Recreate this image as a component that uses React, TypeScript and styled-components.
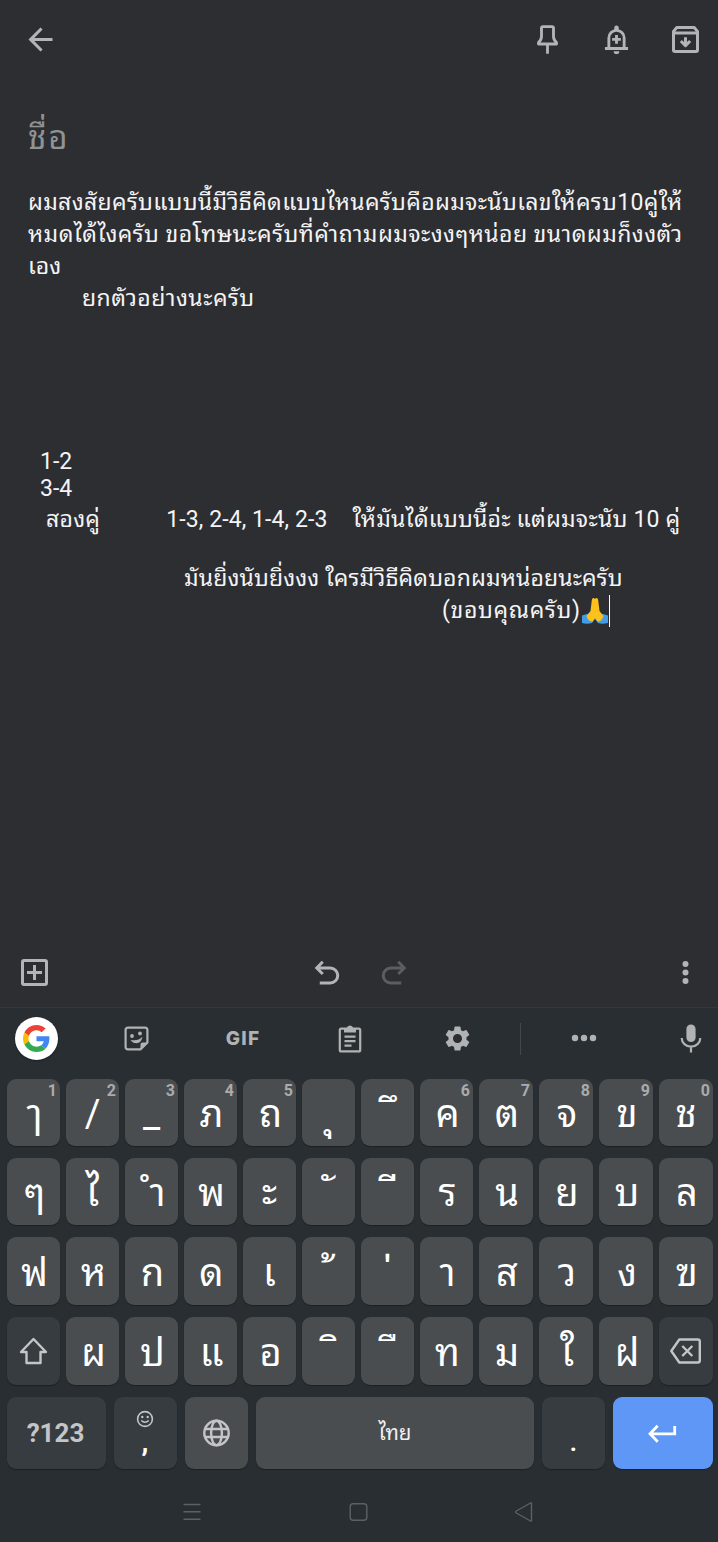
import React from "react";
import styled, { createGlobalStyle } from "styled-components";

const GlobalStyle = createGlobalStyle`
  * { box-sizing: border-box; }
  html, body { margin: 0; padding: 0; background: #2d2e32; }
  body { font-family: Roboto, "Noto Sans Thai Looped", Loma, Waree, Garuda, Umpush, "Droid Sans Thai", "Noto Sans Thai", "Noto Sans", sans-serif; }
  svg { display: block; flex: none; }
`;

const Screen = styled.div`
  width: 718px;
  height: 1542px;
  display: flex;
  flex-direction: column;
  overflow: hidden;
  background: #2d2e32;
  color: #f4f4f5;
`;

const TopBar = styled.header`
  height: 79px;
  flex: none;
  display: flex;
  align-items: center;
  gap: 32px;
  padding: 0 14px 0 22px;
  color: #b3b4b7;
  > :first-child { margin-right: auto; }
`;

const Title = styled.h1`
  margin: 0;
  height: 108px;
  flex: none;
  padding: 39px 0 0 28px;
  font-size: 33px;
  line-height: 40px;
  font-weight: 400;
  letter-spacing: 2px;
  color: #8f9396;
`;

const Note = styled.main`
  flex: 1;
  min-height: 0;
  font-size: 23px;
`;

const Line = styled.div<{ $h?: number }>`
  height: ${(p) => p.$h ?? 32}px;
  line-height: ${(p) => p.$h ?? 32}px;
  display: flex;
  align-items: baseline;
  white-space: pre;
`;

const Run = styled.span<{ $indent: number; $track?: number }>`
  margin-left: ${(p) => p.$indent}px;
  letter-spacing: ${(p) => p.$track ?? 0}px;
`;

const Caret = styled.span`
  width: 1px;
  height: 32px;
  align-self: flex-start;
  background: #fff;
`;

const Emoji = styled.svg`
  align-self: center;
`;

const EditBar = styled.div`
  height: 69px;
  flex: none;
  display: flex;
  align-items: center;
  justify-content: space-between;
  padding: 0 14px 0 16px;
  color: #b3b4b7;
`;

const History = styled.div`
  display: flex;
  gap: 31px;
`;

const Keyboard = styled.section`
  height: 535px;
  flex: none;
  display: flex;
  flex-direction: column;
  background: #292e32;
  border-top: 1px solid #30393f;
`;

const Strip = styled.div`
  height: 71px;
  flex: none;
  display: grid;
  grid-template-columns: 43px 62.5px 31px 76px 31px 76px 31px 76.5px 31px 47px 1px 47.5px 30px 79px 26px;
  align-items: center;
  justify-items: center;
  padding: 0 0 10px 15px;
  color: #b0b2b4;
`;

const Badge = styled.div`
  width: 43px;
  height: 43px;
  display: grid;
  place-items: center;
  border-radius: 50%;
  background: #fff;
  box-shadow: 0 1px 2px rgba(0, 0, 0, 0.35);
`;

const Gif = styled.span`
  font: 800 19px/24px Inter, sans-serif;
  letter-spacing: 1.2px;
`;

const Divider = styled.i`
  width: 1px;
  height: 32px;
  background: #42474b;
`;

const Keys = styled.div`
  display: flex;
  flex-direction: column;
  gap: 12px;
  padding: 0 5px 0 7px;
`;

const KeyRow = styled.div<{ $h: number }>`
  height: ${(p) => p.$h}px;
  display: grid;
  grid-template-columns: repeat(8, 53px) repeat(4, 54px);
  gap: 6px;
`;

const BottomRow = styled.div`
  height: 72px;
  display: grid;
  grid-template-columns: 99px 63px 63px 278px 63px 100px;
  gap: 8px;
`;

type Tone = "light" | "dark" | "blue";
const tones: Record<Tone, string> = { light: "#494d4f", dark: "#373c40", blue: "#5f97f6" };

const Key = styled.div<{ $tone?: Tone }>`
  position: relative;
  display: flex;
  flex-direction: column;
  align-items: center;
  justify-content: center;
  border-radius: 9px;
  background: ${(p) => tones[p.$tone ?? "light"]};
  box-shadow: 0 1px 1px rgba(0, 0, 0, 0.3);
  color: ${(p) => (p.$tone === "blue" ? "#fff" : "#c3c5c7")};
`;

const Glyph = styled.span<{ $dx: number; $dy: number }>`
  height: 66px;
  line-height: 68px;
  font-size: 38px;
  color: #fff;
  white-space: pre;
  transform: translate(${(p) => p.$dx}px, ${(p) => p.$dy}px);
`;

const Hint = styled.sup`
  position: absolute;
  top: 3px;
  right: 3px;
  font: 700 16px/18px Roboto, sans-serif;
  color: #a9abad;
`;

const ModeLabel = styled.span`
  font: 700 26px/30px Roboto, sans-serif;
  padding-right: 2px;
`;

const SpaceLabel = styled.span`
  font-size: 20.5px;
  line-height: 30px;
  color: #f1f1f1;
`;

const Punct = styled.span<{ $drop?: boolean }>`
  font: ${(p) => (p.$drop ? 500 : 700)} 28px/26px Roboto, sans-serif;
  margin-top: ${(p) => (p.$drop ? 17 : 1)}px;
  color: #fff;
`;

const CommaStack = styled.div`
  display: flex;
  flex-direction: column;
  align-items: center;
  padding: 0 1px 2px 0;
`;

const NavBar = styled.nav`
  flex: 1;
  display: flex;
  justify-content: center;
  align-items: center;
  gap: 146px;
  padding: 13px 2px 0 0;
  color: #5d6165;
`;

const Icon = ({ size = 37, sw = 2, opacity = 1, children }: { size?: number; sw?: number; opacity?: number; children: React.ReactNode }) => (
  <svg width={size} height={size} viewBox="-0.333 -0.333 24.667 24.667" fill="none" stroke="currentColor" strokeWidth={sw} opacity={opacity}>
    {children}
  </svg>
);

const Fill = ({ d }: { d: string }) => <path d={d} fill="currentColor" stroke="none" />;

type K = { c: string; n?: string; dx?: number; dy?: number };
const N = "\u00a0";
const rows: { h: number; dy: number; keys: K[] }[] = [
  {
    h: 67,
    dy: 0,
    keys: [
      { c: "ๅ", n: "1" }, { c: "/", n: "2", dx: 0 }, { c: "_", n: "3", dx: 0 }, { c: "ภ", n: "4" }, { c: "ถ", n: "5" },
      { c: N + "ุ" }, { c: N + "ึ", dx: 6 }, { c: "ค", n: "6" }, { c: "ต", n: "7" }, { c: "จ", n: "8" }, { c: "ข", n: "9" }, { c: "ช", n: "0", dx: 0 },
    ],
  },
  {
    h: 67,
    dy: 0,
    keys: [
      { c: "ๆ" }, { c: "ไ", dx: 0 }, { c: N + "ำ" }, { c: "พ" }, { c: "ะ", dx: 0, dy: -1 }, { c: N + "ั", dx: 2 }, { c: N + "ี", dx: 6 },
      { c: "ร" }, { c: "น" }, { c: "ย" }, { c: "บ" }, { c: "ล" },
    ],
  },
  {
    h: 68,
    dy: 1,
    keys: [
      { c: "ฟ" }, { c: "ห" }, { c: "ก" }, { c: "ด" }, { c: "เ", dx: 0 }, { c: N + "้", dx: 3, dy: 2 }, { c: N + "่", dx: 0, dy: 2 },
      { c: "า" }, { c: "ส" }, { c: "ว" }, { c: "ง" }, { c: "ฃ" },
    ],
  },
  {
    h: 68,
    dy: 1,
    keys: [
      { c: "shift" }, { c: "ผ" }, { c: "ป" }, { c: "แ" }, { c: "อ" }, { c: N + "ิ", dx: 6 }, { c: N + "ื", dx: 6 },
      { c: "ท" }, { c: "ม" }, { c: "ใ" }, { c: "ฝ" }, { c: "delete" },
    ],
  },
];

const ShiftIcon = () => (
  <svg width="29" height="28" viewBox="0.5 0 29 28" fill="none" stroke="currentColor" strokeWidth="2.4" strokeLinejoin="round">
    <path d="M15 2 27.500 15H22v11H8V15H2.500Z" />
  </svg>
);

const DeleteIcon = () => (
  <svg width="32" height="26" viewBox="0.7 0 32 26" fill="none" stroke="currentColor" strokeWidth="2.4" strokeLinejoin="round">
    <path d="M10 1.500H28.500q2 0 2 2V22.500q0 2-2 2H10L2 13ZM13 8l10 10M23 8 13 18" />
  </svg>
);

const KeyCell = ({ k, dy }: { k: K; dy: number }) => {
  if (k.c === "shift") return <Key $tone="dark"><ShiftIcon /></Key>;
  if (k.c === "delete") return <Key $tone="dark"><DeleteIcon /></Key>;
  return (
    <Key>
      <Glyph $dx={k.dx ?? 1} $dy={k.dy ?? dy}>{k.c}</Glyph>
      {k.n && <Hint>{k.n}</Hint>}
    </Key>
  );
};

export default function App() {
  return (
    <>
      <GlobalStyle />
      <Screen>
        <TopBar>
          <Icon><Fill d="M20 11H7.830l5.590-5.590L12 4l-8 8 8 8 1.410-1.410L7.830 13H20v-2z" /></Icon>
          <Icon sw={1.900}>
            <path d="M9 3.400h6q1 0 1 1V10q0 2.200 2 4v1H6V14q2-1.800 2-4V4.400q0-1 1-1ZM12 15.500v6" strokeLinejoin="round" />
          </Icon>
          <Icon sw={1.900}>
            <path d="M4.300 18H19.700M6.900 18V11a5.100 5.100 0 0 1 10.200 0V18M12 9v5.800M9.100 11.900h5.800" />
            <Fill d="M10.500 5.800V4.200a1.500 1.500 0 0 1 3 0V5.800ZM10.100 19.800h3.800a1.900 1.900 0 0 1-3.800 0Z" />
          </Icon>
          <Icon>
            <path d="M6.200 4H17.800L20 6.600V19q0 1-1 1H5q-1 0-1-1V6.600ZM4 7.600H20M12 10.500v5.700M8.900 13 12 16.100l3.100-3.100" strokeLinejoin="round" />
          </Icon>
        </TopBar>
        <Title>ชื่อ</Title>
        <Note>
          <Line><Run $indent={28} $track={0.33}>ผมสงสัยครับแบบนี้มีวิธีคิดแบบไหนครับคือผมจะนับเลขให้ครบ10คู่ให้</Run></Line>
          <Line><Run $indent={28} $track={0.43}>หมดได้ไงครับ ขอโทษนะครับที่คำถามผมจะงงๆหน่อย ขนาดผมก็งงตัว</Run></Line>
          <Line><Run $indent={28}>เอง</Run></Line>
          <Line><Run $indent={82} $track={0.46}>ยกตัวอย่างนะครับ</Run></Line>
          <Line $h={133} />
          <Line $h={27}><Run $indent={40}>1-2</Run></Line>
          <Line $h={27}><Run $indent={40}>3-4</Run></Line>
          <Line $h={36}>
            <Run $indent={46} $track={0.25}>สองคู่</Run>
            <Run $indent={66} $track={0.1}>1-3, 2-4, 1-4, 2-3</Run>
            <Run $indent={25} $track={0.2}>ให้มันได้แบบนี้อ่ะ แต่ผมจะนับ 10 คู่</Run>
          </Line>
          <Line $h={25} />
          <Line><Run $indent={184} $track={0.12}>มันยิ่งนับยิ่งงง ใครมีวิธีคิดบอกผมหน่อยนะครับ</Run></Line>
          <Line>
            <Run $indent={442} $track={0.65}>(ขอบคุณครับ)</Run>
            <Emoji width="28" height="28" viewBox="0 0 28 28">
              <path d="M1 18.500Q5 17 9 16.500h10q4 .500 8 2V26q-6 1.500-10 0l-3-4-3 4q-5 1.500-10 0Z" fill="#429de8" />
              <path d="M12.300 1Q10.900 1 10.700 4L9.500 14 5.500 19q1.500 5.500 6 5.500L14 21l2.500 3.500q4.500 0 6-5.500l-4-5L17.300 4Q17.100 1 15.700 1q-1.200 0-1.700 1-.500-1-1.700-1Z" fill="#fcc21b" />
            </Emoji>
            <Caret />
          </Line>
        </Note>
        <EditBar>
          <Icon><Fill d="M19 3H5a2 2 0 0 0-2 2v14a2 2 0 0 0 2 2h14a2 2 0 0 0 2-2V5a2 2 0 0 0-2-2zm0 16H5V5h14v14zm-8-2h2v-4h4v-2h-4V7h-2v4H7v2h4z" /></Icon>
          <History>
            <Icon><path d="M9.500 4.800 5.500 9l4 4M5.500 9H14.500a5 5 0 0 1 0 10H7.500" /></Icon>
            <Icon opacity={0.35}><path d="M14.500 4.800 18.500 9l-4 4M18.500 9H9.500a5 5 0 0 0 0 10H16.500" /></Icon>
          </History>
          <Icon><g fill="currentColor" stroke="none"><circle cx="12" cy="6.300" r="2" /><circle cx="12" cy="12" r="2" /><circle cx="12" cy="17.700" r="2" /></g></Icon>
        </EditBar>
        <Keyboard>
          <Strip>
            <Badge>
              <svg width="27" height="27" viewBox="0 0 48 48">
                <path fill="#EA4335" d="M24 9.500c3.540 0 6.710 1.220 9.210 3.600l6.850-6.850C35.900 2.380 30.470 0 24 0 14.620 0 6.510 5.380 2.560 13.220l7.980 6.190C12.430 13.720 17.740 9.500 24 9.500z" />
                <path fill="#4285F4" d="M46.980 24.550c0-1.570-.150-3.090-.380-4.550H24v9.020h12.940c-.580 2.960-2.260 5.480-4.780 7.180l7.730 6c4.510-4.180 7.090-10.360 7.090-17.650z" />
                <path fill="#FBBC05" d="M10.530 28.590c-.480-1.450-.760-2.990-.760-4.590s.270-3.140.760-4.590l-7.980-6.190C.920 16.460 0 20.120 0 24c0 3.880.920 7.540 2.560 10.780l7.970-6.190z" />
                <path fill="#34A853" d="M24 48c6.480 0 11.930-2.130 15.890-5.810l-7.730-6c-2.150 1.450-4.920 2.300-8.160 2.300-6.260 0-11.570-4.220-13.470-9.910l-7.980 6.190C6.510 42.620 14.620 48 24 48z" />
              </svg>
            </Badge>
            <i />
            <svg width="25" height="25" viewBox="0.5 0.5 25 25" fill="none" stroke="currentColor" strokeWidth="2.200">
              <path d="M4.500 2.100H21.500q2.400 0 2.400 2.400V17L17 23.900H4.500q-2.400 0-2.400-2.400V4.500q0-2.400 2.400-2.400Z" />
              <path d="M17 24V19q0-2 2-2h5Z" fill="currentColor" stroke="none" />
              <path d="M7 14.300q7 2 12-3-1.500 6.500-6 6.500-4 0-6-3.500Z" fill="currentColor" stroke="none" />
              <circle cx="8.500" cy="10.500" r="1.900" fill="currentColor" stroke="none" />
              <circle cx="16.500" cy="8" r="1.900" fill="currentColor" stroke="none" />
            </svg>
            <i />
            <Gif>GIF</Gif>
            <i />
            <svg width="24" height="29" viewBox="0 0.500 24 29" fill="none" stroke="currentColor" strokeWidth="2.200">
              <rect x="1.800" y="5.100" width="20.400" height="22.800" rx="1.500" />
              <path d="M6 4.500H8.700a3.400 3.400 0 0 1 6.600 0H18V9H6Z" fill="currentColor" stroke="none" />
              <path d="M6.500 13.200h11M6.500 17.700h11M6.500 22.200h7" />
            </svg>
            <i />
            <Icon size={31}><Fill d="M19.140 12.940c.040-.3.060-.610.060-.940 0-.320-.020-.640-.070-.940l2.030-1.580a.49.49 0 0 0 .120-.610l-1.920-3.320a.488.488 0 0 0-.590-.220l-2.390.960c-.5-.380-1.030-.7-1.620-.940l-.360-2.540a.484.484 0 0 0-.480-.410h-3.840c-.240 0-.430.170-.470.410l-.360 2.540c-.590.240-1.130.570-1.620.940l-2.390-.960c-.220-.080-.470 0-.590.220L2.740 8.870c-.120.210-.080.470.120.610l2.030 1.580c-.050.300-.090.630-.090.940s.020.640.070.940l-2.030 1.580a.49.49 0 0 0-.120.610l1.920 3.320c.120.220.370.290.590.220l2.390-.960c.5.380 1.030.7 1.620.940l.360 2.540c.050.240.240.410.480.410h3.840c.240 0 .440-.170.470-.410l.360-2.540c.590-.240 1.130-.560 1.620-.940l2.390.960c.220.080.470 0 .590-.220l1.920-3.320c.120-.220.070-.470-.120-.610l-2.010-1.580zM12 15.600c-1.980 0-3.600-1.620-3.600-3.600s1.620-3.600 3.600-3.600 3.600 1.620 3.600 3.600-1.620 3.600-3.600 3.600z" /></Icon>
            <i />
            <Divider />
            <i />
            <svg width="26" height="9" viewBox="0 0 26 9" fill="currentColor"><circle cx="4" cy="4" r="3.200" /><circle cx="13" cy="4" r="3.200" /><circle cx="22" cy="4" r="3.200" /></svg>
            <i />
            <svg width="22" height="29" viewBox="0 0.500 22 29" fill="none" stroke="currentColor" strokeWidth="2.200">
              <rect x="6.400" y="1" width="9.200" height="17.500" rx="4.600" fill="currentColor" stroke="none" />
              <path d="M1.700 14.500a9.300 8.600 0 0 0 18.600 0M11 23v6" />
            </svg>
          </Strip>
          <Keys>
            {rows.map((r, i) => (
              <KeyRow key={i} $h={r.h}>
                {r.keys.map((k) => <KeyCell key={k.c} k={k} dy={r.dy} />)}
              </KeyRow>
            ))}
            <BottomRow>
              <Key $tone="dark"><ModeLabel>?123</ModeLabel></Key>
              <Key $tone="dark">
                <CommaStack>
                  <svg width="18" height="18" viewBox="0 0 18 18" fill="none" stroke="currentColor" strokeWidth="1.600">
                    <circle cx="9" cy="9" r="7.400" />
                    <path d="M5.300 10.500q3.700 3.500 7.400 0" />
                    <circle cx="6.300" cy="7" r="1.200" fill="currentColor" stroke="none" />
                    <circle cx="11.700" cy="7" r="1.200" fill="currentColor" stroke="none" />
                  </svg>
                  <Punct>,</Punct>
                </CommaStack>
              </Key>
              <Key>
                <svg width="27" height="28" viewBox="0.500 0 27 28" fill="none" stroke="currentColor" strokeWidth="2.400">
                  <circle cx="14" cy="14" r="12.200" />
                  <ellipse cx="14" cy="14" rx="5.400" ry="12.200" />
                  <path d="M2.500 10h23M2.500 18h23" />
                </svg>
              </Key>
              <Key><SpaceLabel>ไทย</SpaceLabel></Key>
              <Key $tone="dark"><Punct $drop>.</Punct></Key>
              <Key $tone="blue">
                <svg width="30" height="20" viewBox="0.800 0 30 20" fill="none" stroke="currentColor" strokeWidth="2.800">
                  <path d="M27.500 3V10.800H3M10.500 2.800 2.800 10.800l7.700 8" />
                </svg>
              </Key>
            </BottomRow>
          </Keys>
          <NavBar>
            <svg width="20" height="20" viewBox="0 0 20 20" stroke="currentColor" strokeWidth="1.500"><path d="M1.500 2.500h17M1.500 9.800h17M1.500 17.200h17" /></svg>
            <svg width="20" height="20" viewBox="-0.500 0 20 20" fill="none" stroke="currentColor" strokeWidth="1.400"><rect x="1.700" y="1.700" width="16.600" height="16.600" rx="3" /></svg>
            <svg width="20" height="20" viewBox="0 0 20 20" fill="none" stroke="currentColor" strokeWidth="1.400" strokeLinejoin="round"><path d="M17.500 1.500V18.500q0 1-1 .500L2.300 11q-1-1 0-2L16.500 1q1-.500 1 .500Z" /></svg>
          </NavBar>
        </Keyboard>
      </Screen>
    </>
  );
}
